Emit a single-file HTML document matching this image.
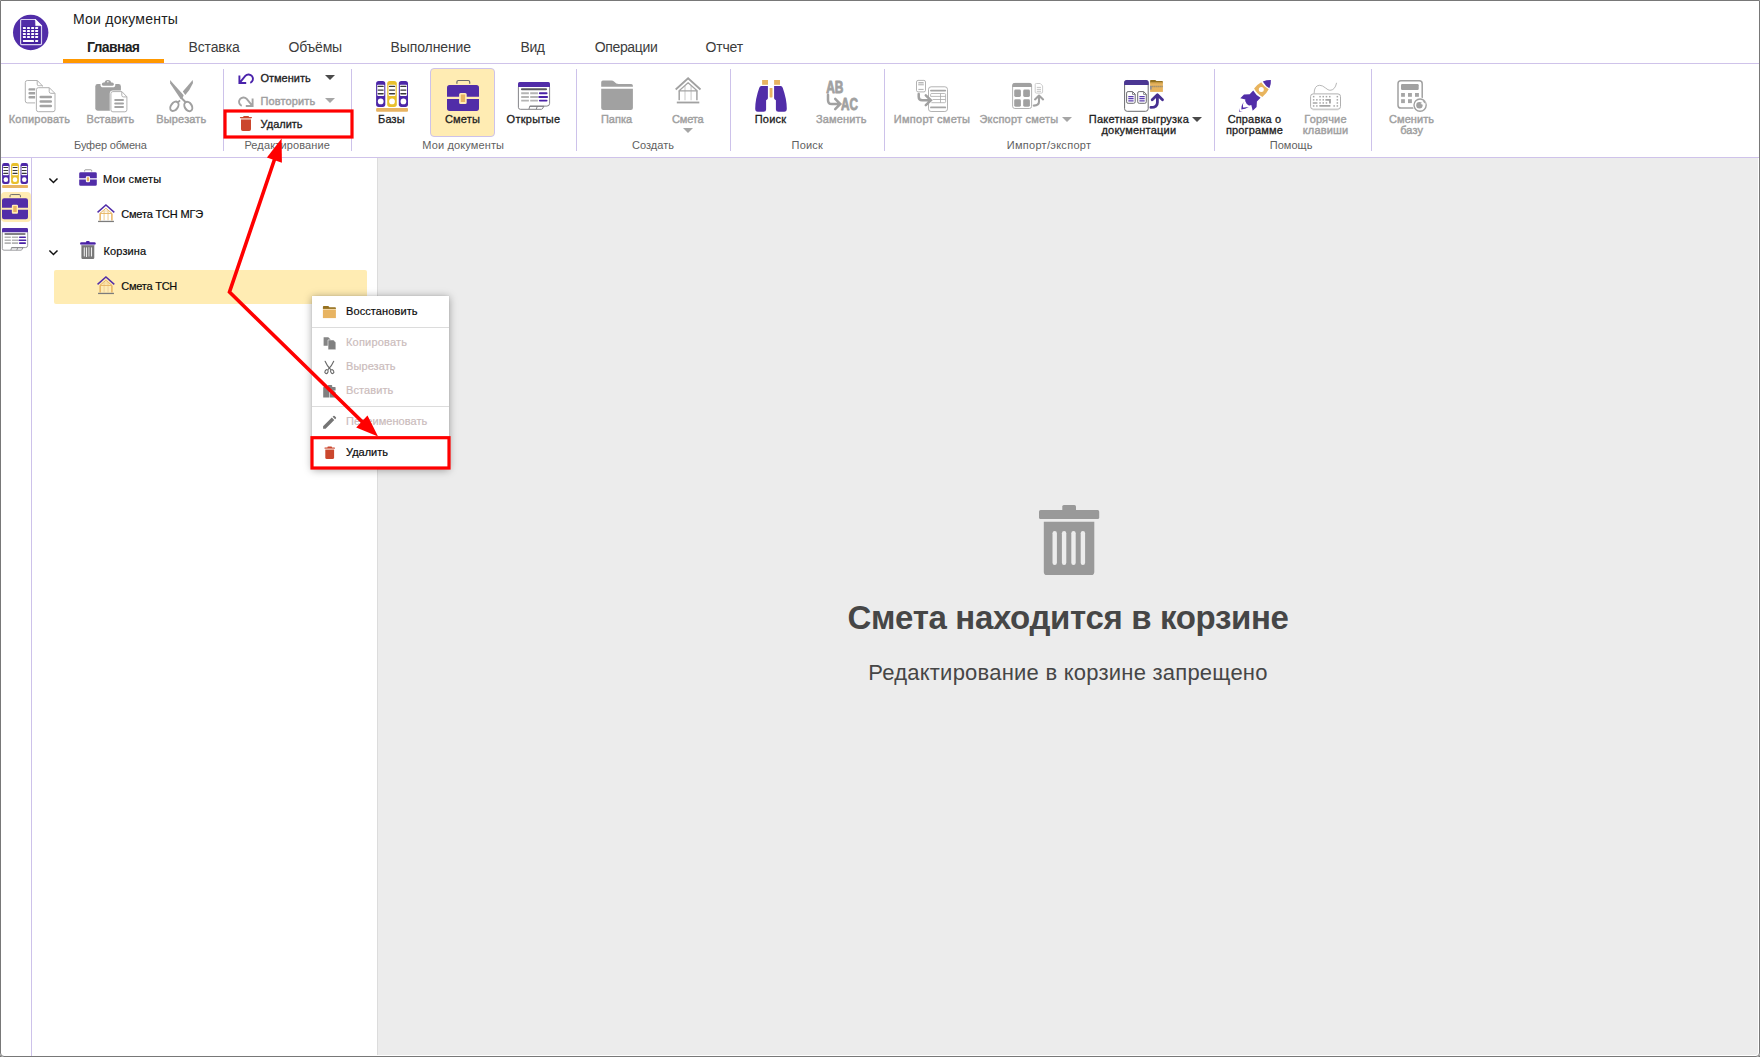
<!DOCTYPE html>
<html lang="ru">
<head>
<meta charset="utf-8">
<title>Мои документы</title>
<style>
*{box-sizing:border-box;margin:0;padding:0}
html,body{width:1760px;height:1057px;overflow:hidden;background:#fff}
body{position:relative;font-family:"Liberation Sans",sans-serif;color:#212121}
.abs{position:absolute}
.t{position:absolute;white-space:nowrap;line-height:1}
svg{position:absolute;overflow:visible}
/* window frame */
#frame{position:absolute;left:0;top:0;width:1760px;height:1057px;border:1px solid #787878;border-radius:0 0 4px 4px;box-shadow:0 0 0 3px #787878;z-index:50;pointer-events:none}
/* header */
#title{left:73px;top:12px;font-size:14px;letter-spacing:.24px;color:#212121}
.tab{position:absolute;top:40px;font-size:14px;line-height:14px;white-space:nowrap;color:#3c3c3c}
.tab.act{font-weight:700;color:#212121}
#tabline{left:63px;top:59px;width:101px;height:4px;background:#ff9800}
.hl{position:absolute;left:1px;width:1758px;height:1px;background:#cfc3ea}
.vs{position:absolute;top:69px;width:1px;height:82px;background:#cdc2ea}
/* ribbon labels */
.lb{position:absolute;width:140px;text-align:center;font-size:11px;line-height:11px;top:114px;white-space:nowrap;color:#212121;-webkit-text-stroke:.3px currentColor;letter-spacing:.15px}
.lb.dis{color:#a0a0a0;-webkit-text-stroke-width:.42px}
.gl{position:absolute;width:160px;text-align:center;font-size:11px;line-height:11px;top:140px;white-space:nowrap;color:#5f5f5f;letter-spacing:.13px}
.sm{position:absolute;font-size:11px;line-height:11px;white-space:nowrap;color:#212121;-webkit-text-stroke:.3px currentColor}
.sm.dis{color:#a0a0a0;-webkit-text-stroke-width:.42px}
.tri{position:absolute;width:0;height:0;border-left:5px solid transparent;border-right:5px solid transparent;border-top:5px solid #4a4a4a}
.tri.dis{border-top-color:#a6a6a6}
/* tree */
.tr{position:absolute;font-size:11px;line-height:11px;white-space:nowrap;color:#0c0c0c;-webkit-text-stroke:.2px currentColor}
/* menu */
#menu{left:312px;top:296px;width:137px;height:173px;background:#fff;box-shadow:0 1px 8px rgba(0,0,0,.36),0 0 1px rgba(0,0,0,.12)}
.mi{position:absolute;left:34px;font-size:11px;line-height:11px;white-space:nowrap;color:#0c0c0c;-webkit-text-stroke:.2px currentColor}
.mi.dis{color:#cbbcbc}
.md{position:absolute;left:0;width:137px;height:1px;background:#dcdcdc}
</style>
</head>
<body>
<!-- ===== header ===== -->
<div id="title" class="t">Мои документы</div>
<div class="tab act" style="left:87px;letter-spacing:-.66px">Главная</div>
<div class="tab" style="left:188.4px;letter-spacing:-.1px">Вставка</div>
<div class="tab" style="left:288.5px;letter-spacing:-.21px">Объёмы</div>
<div class="tab" style="left:390.6px;letter-spacing:-.11px">Выполнение</div>
<div class="tab" style="left:520.6px;letter-spacing:-.5px">Вид</div>
<div class="tab" style="left:594.7px;letter-spacing:-.34px">Операции</div>
<div class="tab" style="left:705.6px;letter-spacing:-.21px">Отчет</div>
<div id="tabline" class="abs"></div>
<div class="hl" style="top:63px"></div>
<div class="hl" style="top:157px"></div>

<!-- ===== ribbon separators ===== -->
<div class="vs" style="left:223px"></div>
<div class="vs" style="left:351px"></div>
<div class="vs" style="left:576px"></div>
<div class="vs" style="left:730px"></div>
<div class="vs" style="left:884px"></div>
<div class="vs" style="left:1214px"></div>
<div class="vs" style="left:1371px"></div>

<!-- active button bg -->
<div class="abs" style="left:1px;top:192px;width:30px;height:30px;background:#ffecb3;border-radius:4px"></div>
<div class="abs" style="left:54px;top:270px;width:313px;height:34px;background:#ffecb3;border-radius:2px"></div>
<div class="abs" style="left:430px;top:68px;width:65px;height:69px;background:#ffecb3;border:1px solid #cdc2ea;border-radius:4px"></div>


<!-- ===== icons (page coordinates) ===== -->
<svg id="ic" width="1760" height="1057" viewBox="0 0 1760 1057" style="left:0;top:0">
<defs>
  <g id="binders">
    <rect x="1.1" y="1" width="9.2" height="25.9" rx="2.6" fill="#4c27a8"/>
    <rect x="12.2" y="1" width="9.6" height="25.9" rx="2.6" fill="#e8c02c"/>
    <rect x="23.8" y="1" width="9.2" height="25.9" rx="2.6" fill="#4c27a8"/>
    <g fill="#fff">
      <rect x="2.2" y="4.7" width="7.1" height="11.2" rx=".8"/><rect x="13.5" y="4.7" width="7.1" height="11.2" rx=".8"/><rect x="24.9" y="4.7" width="7.1" height="11.2" rx=".8"/>
      <circle cx="5.7" cy="21.4" r="2.85"/><circle cx="17" cy="21.4" r="2.85"/><circle cx="28.4" cy="21.4" r="2.85"/>
    </g>
    <path d="M3.2,6.4h4.9M3.2,10.1h4.9M3.2,13.7h4.9M14.6,6.4h4.9M14.6,10.1h4.9M14.6,13.7h4.9M25.9,6.4h4.9M25.9,10.1h4.9M25.9,13.7h4.9" stroke="#3a3a3a" stroke-width="1.4" stroke-linecap="round"/>
    <rect x="1.1" y="28.1" width="31.9" height="3.7" rx="1" fill="#e8b462"/>
  </g>
  <g id="brief">
    <path d="M9.9,7.8V6q0,-1.5 1.5,-1.5H21.2q1.5,0 1.5,1.5V7.8" fill="none" stroke="#6b6b6b" stroke-width="1.2"/>
    <path d="M2.6,9.1H29.4a2.6,2.6 0 0 1 2.6,2.6V20.8H19.7V18.5a1.5,1.5 0 0 0 -1.5,-1.5H13.6a1.5,1.5 0 0 0 -1.5,1.5V20.8H0V11.7A2.6,2.6 0 0 1 2.6,9.1Z" fill="#512da8"/>
    <path d="M0,23.1H12.1V26.5a1.5,1.5 0 0 0 1.5,1.5H18.2a1.5,1.5 0 0 0 1.5,-1.5V23.1H32V32.3a2.6,2.6 0 0 1 -2.6,2.6H2.6A2.6,2.6 0 0 1 0,32.3Z" fill="#512da8"/>
    <rect x="13.8" y="18.5" width="4.3" height="7.6" rx=".4" fill="#e8b462"/>
  </g>
  <g id="win">
    <path d="M.4,5V25.2a2,2 0 0 0 2,2H10.9l.9,-3.2H28.9a2.7,2.7 0 0 0 2.7,-2.7V5" fill="#fff" stroke="#77777c" stroke-width=".9"/>
    <path d="M11.8,24.2H25.9l-1.6,2.6q-.3,.4 -.9,.4H10.9M19.3,24.2l-1.1,3" fill="none" stroke="#77777c" stroke-width=".9"/>
    <path d="M0,5V1.6A1.6,1.6 0 0 1 1.6,0H30.4A1.6,1.6 0 0 1 32,1.6V5Z" fill="#512da8"/>
    <path d="M3.9,7.2H28.1" stroke="#5a5a5e" stroke-width="1.9" stroke-linecap="round"/>
    <path d="M3.2,11.2h7.7M12.2,11.2h7.7M3.2,14.9h7.7M12.2,14.9h7.7M3.2,18.5h7.7M12.2,18.5h7.7" stroke="#b4b4b4" stroke-width="1.9"/>
    <path d="M21.8,11.2h6.8M21.2,14.9h7.9M21.8,18.5h6.8" stroke="#4a22a6" stroke-width="1.9" stroke-linecap="round"/>
  </g>
  <g id="house">
    <path d="M10,8.6V22.9M16.1,8.6V22.9" stroke="var(--c3)" stroke-width="1.3" fill="none"/>
    <path d="M4.1,13.4L13.1,5.3L22.1,13.4Z" stroke="var(--c2)" stroke-width="1.2" fill="none" stroke-linejoin="round"/>
    <path d="M4.2,13.4V22.9M21.9,13.4V22.9" stroke="var(--c2)" stroke-width="1.5" fill="none"/>
    <path d="M.7,12.1L13.1,.9L25.5,12.1" stroke="var(--c1)" stroke-width="1.8" fill="none"/>
    <rect x="1.8" y="24.2" width="22.5" height="1.8" fill="var(--c4)"/>
  </g>
  <g id="house2" fill="none">
    <path d="M12.1,14.3V24.3M16.04,14.3V24.3" stroke="#f2d5a2" stroke-width="1.2"/>
    <path d="M7.9,17.4L13.92,12.3L19.95,17.4Z" stroke="#e8b462" stroke-width="1" stroke-linejoin="round"/>
    <path d="M10.6,15H17.2" stroke="#f0cf96" stroke-width=".8"/>
    <path d="M8.15,17.4V24.4M19.9,17.4V24.4" stroke="#e8b462" stroke-width="1.5"/>
    <path d="M5.55,16.35L13.92,8.85L22.3,16.35" stroke="#512da8" stroke-width="1.45"/>
    <rect x="6.05" y="24.8" width="15.9" height="1.3" fill="#7c7c7c"/>
  </g>
</defs>

<!-- logo -->
<circle cx="30.7" cy="32.45" r="17.7" fill="#512da8"/>
<rect x="21" y="26.2" width="20.3" height="18" fill="#43209f"/>
<path d="M21.6,19.5H35.3L41.5,25.8V43.6q0,1 -1,1H21.6q-1,0 -1,-1V20.5q0,-1 1,-1Z" fill="none" stroke="#d9d1ef" stroke-width="1.2"/>
<path d="M35.3,19.3L41.8,25.8H35.6Z" fill="#fff" stroke="#fff" stroke-width=".4" stroke-linejoin="round"/>
<g fill="#fff">
  <rect x="22.9" y="27" width="3" height="1.9" rx=".4"/><rect x="27" y="27" width="3" height="1.9" rx=".4"/><rect x="31.1" y="27" width="3" height="1.9" rx=".4"/><rect x="35.1" y="27" width="3" height="1.9" rx=".4"/>
  <rect x="22.9" y="30" width="3" height="1.9" rx=".4"/><rect x="27" y="30" width="3" height="1.9" rx=".4"/><rect x="31.1" y="30" width="3" height="1.9" rx=".4"/><rect x="35.1" y="30" width="3" height="1.9" rx=".4"/>
  <rect x="22.9" y="33.1" width="3" height="1.9" rx=".4"/><rect x="27" y="33.1" width="3" height="1.9" rx=".4"/><rect x="31.1" y="33.1" width="3" height="1.9" rx=".4"/><rect x="35.1" y="33.1" width="3" height="1.9" rx=".4"/>
  <rect x="22.9" y="36.1" width="3" height="1.9" rx=".4"/><rect x="27" y="36.1" width="3" height="1.9" rx=".4"/><rect x="31.1" y="36.1" width="3" height="1.9" rx=".4"/><rect x="35.1" y="36.1" width="3" height="1.9" rx=".4"/>
  <rect x="22.9" y="40" width="11.1" height="1.9" rx=".4"/><rect x="35.1" y="40" width="3" height="1.9" rx=".4"/>
</g>

<!-- copy (disabled) -->
<g stroke="#a8a8a8" stroke-width=".9" fill="#fff">
  <path d="M27.3,80.5H37.3L42.5,85.9V100.9a2,2 0 0 1 -2,2H27.3a2,2 0 0 1 -2,-2V82.5a2,2 0 0 1 2,-2Z"/>
  <path d="M37.2,80.6V84.2a1.6,1.6 0 0 0 1.6,1.6H42.4" fill="none"/>
</g>
<path d="M29.6,89.4H38M29.6,93.2H38M29.6,97.2H38" stroke="#a3a3a3" stroke-width="2.4" stroke-linecap="round"/>
<g stroke="#a8a8a8" stroke-width=".9" fill="#fff">
  <path d="M38.4,87.7H49.3L55,93.4V109.7a2,2 0 0 1 -2,2H38.4a2,2 0 0 1 -2,-2V89.7a2,2 0 0 1 2,-2Z" stroke="#fff" stroke-width="2.6"/>
  <path d="M38.4,87.7H49.3L55,93.4V109.7a2,2 0 0 1 -2,2H38.4a2,2 0 0 1 -2,-2V89.7a2,2 0 0 1 2,-2Z"/>
  <path d="M49.2,87.8V91.6a1.7,1.7 0 0 0 1.7,1.7H54.9" fill="none"/>
</g>
<path d="M40.7,97.1H50.8M40.7,101.5H50.8M40.7,105.9H50.8" stroke="#a3a3a3" stroke-width="2.5" stroke-linecap="round"/>

<!-- paste (disabled) -->
<rect x="95.3" y="84" width="25.6" height="26.7" rx="2.4" fill="#a0a0a0"/>
<path d="M100.5,83V84.7a2.6,2.6 0 0 0 2.6,2.6H112.7a2.6,2.6 0 0 0 2.6,-2.6V83Z" fill="#fff"/>
<rect x="101.9" y="82.5" width="11.9" height="3.3" rx="1.6" fill="#a0a0a0"/>
<path d="M104.4,83.4Q104.7,80 107.9,80Q111,80 111.3,83.4Z" fill="#a0a0a0"/>
<circle cx="107.9" cy="81.7" r=".75" fill="#fff"/>
<path d="M112.9,91.6H121.9L126.9,96.8V109.8a2,2 0 0 1 -2,2H112.9a2,2 0 0 1 -2,-2V93.6a2,2 0 0 1 2,-2Z" fill="#fff" stroke="#fff" stroke-width="2.3"/>
<path d="M112.9,91.6H121.9L126.9,96.8V109.8a2,2 0 0 1 -2,2H112.9a2,2 0 0 1 -2,-2V93.6a2,2 0 0 1 2,-2Z" fill="#fff" stroke="#a8a8a8" stroke-width=".9"/>
<path d="M121.8,91.7V95.3a1.6,1.6 0 0 0 1.6,1.6H126.8" fill="none" stroke="#a8a8a8" stroke-width=".9"/>
<path d="M115.2,99.9H123M115.2,103.4H123M115.2,106.9H123" stroke="#a3a3a3" stroke-width="2" stroke-linecap="round"/>

<!-- scissors (disabled) -->
<g fill="#a0a0a0">
  <path d="M170,79.9L183.7,95.3L182.6,98.1L180.6,98.9L170.2,83.6Z"/>
  <path d="M192.7,80.1L193,83Q190,90 185.3,95L182.8,91.6Z"/>
</g>
<g fill="none" stroke="#a0a0a0" stroke-width="2">
  <path d="M181.2,97.8L186.2,102.8"/>
  <ellipse cx="188.3" cy="106.5" rx="3.5" ry="5" transform="rotate(-32 188.3 106.5)"/>
  <path d="M180,100.4L178.2,102.2" stroke-width="1.8"/>
  <ellipse cx="174.4" cy="106.3" rx="3.4" ry="5.2" transform="rotate(36 174.4 106.3)"/>
</g>

<!-- undo / redo -->
<path d="M239.4,75.4V83H246.2M239.6,82.8L245.3,75.9A4.4,4.4 0 1 1 250.3,82.9" fill="none" stroke="#4a23ab" stroke-width="1.9" stroke-linejoin="miter"/>
<path d="M252.6,98.4V106H245.8M252.4,105.8L246.7,98.9A4.4,4.4 0 1 0 241.7,105.9" fill="none" stroke="#a3a3a3" stroke-width="1.9"/>
<!-- delete -->
<g fill="#cb472d">
  <rect x="243.2" y="116" width="5.8" height="1.6" rx=".8"/>
  <rect x="239.9" y="116.9" width="12.1" height="1.3" rx=".6"/>
  <rect x="241" y="118.1" width="10" height="1.8" fill="#e6ab9d"/>
  <path d="M241,119.8H251V129.2a1.8,1.8 0 0 1 -1.8,1.8H242.8a1.8,1.8 0 0 1 -1.8,-1.8Z"/>
</g>

<!-- bases / estimates / opened -->
<use href="#binders" transform="translate(375,80)"/>
<use href="#brief" transform="translate(447,76) "/>
<use href="#win" transform="translate(518,82.1)"/>

<!-- folder (disabled) -->
<path d="M602.9,80.5H611.4Q613,80.5 614.3,81.8Q616.2,84.1 618.5,84.1H631.2a1.7,1.7 0 0 1 1.7,1.7V86.7H601.2V82.2a1.7,1.7 0 0 1 1.7,-1.7Z" fill="#a1a1a1"/>
<path d="M601.2,88.7H632.9V107.9a2.1,2.1 0 0 1 -2.1,2.1H603.3a2.1,2.1 0 0 1 -2.1,-2.1Z" fill="#a1a1a1"/>
<!-- new estimate house (disabled) -->
<g style="--c1:#a1a1a1;--c2:#a4a4a4;--c3:#d4d4d4;--c4:#a1a1a1" transform="translate(675,77.4)"><use href="#house"/></g>

<!-- binoculars -->
<g fill="#e8b462"><rect x="762.1" y="80" width="5.9" height="4.8"/><rect x="774.1" y="80" width="5.9" height="4.8"/><rect x="769.6" y="87.9" width="2.9" height="9.5" rx=".6"/></g>
<path id="bino" d="M761.3,86H767.9V98.2Q767.9,99.4 766.1,100.2V109.4Q766.1,111.8 763.6,111.8H757.8Q755.2,111.8 755.2,108.6Q755.3,99 759.2,88Q759.8,86 761.3,86Z" fill="#512da8"/>
<use href="#bino" transform="translate(1542,0) scale(-1,1)"/>

<!-- replace AB -> AC (disabled) -->
<g font-family="'Liberation Sans',sans-serif" font-weight="700" font-size="16.6" fill="#a1a1a1" stroke="#a1a1a1" stroke-width=".9" stroke-linejoin="round">
  <text x="826.2" y="92.8" textLength="17.2" lengthAdjust="spacingAndGlyphs">AB</text>
  <text x="841.1" y="109.7" textLength="16.9" lengthAdjust="spacingAndGlyphs">AC</text>
</g>
<path d="M828,94.8V100.2Q828,104 831.8,104H839.6M835.2,98.9L840.3,104L835.2,109.1" fill="none" stroke="#a1a1a1" stroke-width="2.5" stroke-linecap="round" stroke-linejoin="miter"/>

<!-- import (disabled) -->
<g fill="#fff" stroke="#aaa" stroke-width=".9">
  <rect x="916.5" y="80.4" width="9" height="11.5" rx="1.6"/>
  <rect x="928.5" y="86.8" width="19" height="24.7" rx="2.6"/>
  <path d="M931.4,93.5H944.6Q945.6,93.5 945.6,94.5V101.7Q945.6,102.7 944.6,102.7H931.4M930.7,96.4H945.6M932.6,99.5H945.6M940.5,93.5V102.7M930.6,96.4V94.5q0,-1 1,-1" stroke-width=".8"/>
</g>
<path d="M918.4,82.6H923.6M918.4,89.4H923.6" stroke="#a6a6a6" stroke-width=".9"/>
<rect x="918.2" y="83.5" width="5.6" height="1.9" fill="#c4c4c4"/>
<path d="M930.9,90.6H945.3M930.9,107.4H945.3" stroke="#a6a6a6" stroke-width="1.7" stroke-linecap="round"/>
<path d="M918.7,94V96.8Q918.7,100.3 922.2,100.3H930M925.8,95.4L930.9,100.3L925.8,105.2" fill="none" stroke="#a1a1a1" stroke-width="2.5" stroke-linecap="round"/>

<!-- export (disabled) -->
<rect x="1012.6" y="83.4" width="19" height="25.1" rx="2.2" fill="#fff" stroke="#aaa" stroke-width=".9"/>
<path d="M1012.3,86.9V85.4a2.3,2.3 0 0 1 2.3,-2.3H1029.6a2.3,2.3 0 0 1 2.3,2.3V86.9Z" fill="#a1a1a1"/>
<g fill="#a1a1a1"><rect x="1014.2" y="89.6" width="6.7" height="7.4" rx="1.4"/><rect x="1023.2" y="89.6" width="6.7" height="7.4" rx="1.4"/><rect x="1014.2" y="99.3" width="6.7" height="7.4" rx="1.4"/><rect x="1023.2" y="99.3" width="6.7" height="7.4" rx="1.4"/></g>
<path d="M1036.3,83.5H1040.3L1042.6,85.9V92a1.1,1.1 0 0 1 -1.1,1.1H1036.3a1.1,1.1 0 0 1 -1.1,-1.1V84.6a1.1,1.1 0 0 1 1.1,-1.1Z" fill="#fff" stroke="#c6c6c6" stroke-width=".9"/>
<path d="M1036.8,87.4H1041M1036.8,89.4H1041M1036.8,91.3H1041" stroke="#c0c0c0" stroke-width=".9"/>
<path d="M1035,99.4L1039,95.6L1043.1,99.4M1039,96V101.5Q1039,105.6 1033.8,105.6" fill="none" stroke="#a1a1a1" stroke-width="2.1" stroke-linecap="round" stroke-linejoin="round"/>

<!-- batch export -->
<rect x="1124.6" y="80.5" width="23.6" height="30.8" rx="2.6" fill="#fff" stroke="#6c6c70" stroke-width="1"/>
<path d="M1124.1,84.9V82.7a2.7,2.7 0 0 1 2.7,-2.7H1146a2.7,2.7 0 0 1 2.7,2.7V84.9Z" fill="#4b3793"/>
<g fill="#fff" stroke="#6c6c70" stroke-width="1">
  <path d="M1128.1,91.6H1132.6L1135.2,94.2V101.8a1.5,1.5 0 0 1 -1.5,1.5H1128.1a1.5,1.5 0 0 1 -1.5,-1.5V93.1a1.5,1.5 0 0 1 1.5,-1.5Z"/>
  <path d="M1139.2,91.6H1143.7L1146.3,94.2V101.8a1.5,1.5 0 0 1 -1.5,1.5H1139.2a1.5,1.5 0 0 1 -1.5,-1.5V93.1a1.5,1.5 0 0 1 1.5,-1.5Z"/>
  <path d="M1132.5,91.8V94.4H1135.1M1143.6,91.8V94.4H1146.2" fill="none" stroke-width=".8"/>
</g>
<path d="M1128.3,96.6H1133.6M1128.3,98.7H1133.6M1128.3,100.8H1133.6M1139.4,96.6H1144.7M1139.4,98.7H1144.7M1139.4,100.8H1144.7" stroke="#5b3db0" stroke-width="1.2"/>
<path d="M1150.1,80.8q0,-.8 .8,-.8H1155q.7,0 1,.5l.3,.4H1162.1q.8,0 .8,.8V83H1150.1Z" fill="#93701f"/>
<rect x="1150.1" y="82.4" width="12.8" height="9.5" fill="#e8b45e"/>
<rect x="1150.1" y="82.4" width="12.8" height=".9" fill="#c49a45"/>
<path d="M1150.3,86.6H1162.9" stroke="#8b8578" stroke-width="1.5" stroke-dasharray="1.2,.8"/>
<rect x="1150.1" y="86" width="1.6" height="3.6" fill="#8d8d95"/>
<path d="M1152.2,99.8L1157.4,94.8L1162.5,99.8M1157.4,95.4V102.4Q1157.4,107.4 1150.9,107.4" fill="none" stroke="#462f91" stroke-width="2.8" stroke-linecap="round" stroke-linejoin="round"/>

<!-- about: rocket -->
<path d="M1262.8,81.4Q1266.6,79.9 1270.9,80Q1271.2,84.3 1269.4,88.2Q1265.5,86.2 1262.8,81.4Z" fill="#512da8"/>
<path d="M1261.2,82.2Q1264,86.8 1268.7,89.2Q1266.6,93.6 1262.4,96.9Q1257,94 1254.1,88.5Q1257,84.5 1261.2,82.2Z" fill="#e8b45e"/>
<circle cx="1261.3" cy="89.4" r="2.5" fill="#fff"/>
<path d="M1253.2,90.5Q1256,95.5 1260.6,97.7L1256.9,101.5L1256.6,107L1252.7,110.7L1251.3,105.1Q1250.2,105.6 1248.9,105.4Q1246,103.8 1245.3,101.2Q1245,100.2 1245.4,99.6L1240.3,98.3L1244,94.4L1249.7,94.2Z" fill="#512da8"/>
<path d="M1243.5,102Q1241.2,105.6 1241.3,109.4Q1245.2,109.4 1248.8,107.1Q1245.4,107.7 1243,107.5Q1242.7,104.8 1243.5,102Z" fill="#512da8"/>
<path d="M1239.6,108.1Q1238.9,110 1239.2,111.8Q1241,112 1242.8,111.5Q1240.9,111.4 1239.8,110.9Q1239.3,109.6 1239.6,108.1Z" fill="#512da8"/>

<!-- hotkeys keyboard (disabled) -->
<rect x="1310.6" y="93.9" width="29.9" height="15.3" rx="2.6" fill="#fff" stroke="#b0b0b0" stroke-width="1"/>
<path d="M1312.6,109.9H1338.4" stroke="#d2d2d2" stroke-width=".8"/>
<path d="M1314.1,93.6Q1314.2,85.3 1319.7,85.3Q1322.4,85.3 1325.6,88Q1328.2,90.3 1329.9,90.3Q1335,90.3 1336.6,82.8" fill="none" stroke="#b0b0b0" stroke-width=".9"/>
<g fill="#a6a6a6">
  <rect x="1312.9" y="95.9" width="1.5" height="1.5"/><rect x="1319.3" y="95.9" width="1.5" height="1.5"/><rect x="1322.5" y="95.9" width="1.5" height="1.5"/><rect x="1325.7" y="95.9" width="1.5" height="1.5"/><rect x="1329" y="95.9" width="1.5" height="1.5"/><rect x="1336.6" y="95.9" width="1.5" height="1.5"/>
  <rect x="1312.9" y="99.1" width="1.5" height="1.5"/><rect x="1316.1" y="99.1" width="1.5" height="1.5"/><rect x="1319.3" y="99.1" width="1.5" height="1.5"/><rect x="1322.5" y="99.1" width="1.5" height="1.5"/><rect x="1336.6" y="99.1" width="1.5" height="1.5"/>
  <path d="M1325.4,98.9H1330.9V103.6H1329V100.7H1325.4Z"/>
  <rect x="1312.6" y="102.2" width="5" height="1.5" rx=".7"/><rect x="1319.3" y="102.2" width="1.5" height="1.5"/><rect x="1322.5" y="102.2" width="1.5" height="1.5"/><rect x="1325.7" y="102.2" width="1.5" height="1.5"/><rect x="1336.6" y="102.2" width="1.5" height="1.5"/>
  <rect x="1312.9" y="105.2" width="1.5" height="1.5"/><rect x="1316.1" y="105.2" width="1.5" height="1.5"/><rect x="1319.2" y="105" width="11.4" height="1.8" rx=".8"/><rect x="1333.4" y="105.2" width="1.5" height="1.5"/><rect x="1336.6" y="105.2" width="1.5" height="1.5"/>
</g>

<!-- change base calculator (disabled) -->
<rect x="1398" y="80.8" width="24.2" height="27.3" rx="2.9" fill="#fff" stroke="#a1a1a1" stroke-width="1.5"/>
<rect x="1401" y="84.1" width="17.7" height="5.9" rx="1.2" fill="#a1a1a1"/>
<g fill="#a6a6a6"><rect x="1401.1" y="93" width="3.8" height="3.8"/><rect x="1408" y="93" width="3.9" height="3.8"/><rect x="1415" y="93" width="3.9" height="3.8"/><rect x="1401.1" y="99.2" width="3.8" height="3.9"/><rect x="1408" y="99.2" width="3.9" height="3.9"/></g>
<circle cx="1420.1" cy="105.1" r="7.6" fill="#fff"/>
<circle cx="1420.1" cy="105.1" r="6.1" fill="#fff" stroke="#a1a1a1" stroke-width="1.4"/>
<circle cx="1419.4" cy="105.2" r="3.2" fill="#a1a1a1"/>
<path d="M1420.4,104L1425.4,100.2L1425.2,104.9Z" fill="#fff"/><path d="M1422.6,101.2L1425.1,101.1L1425,103.6Z" fill="#a1a1a1"/>

<!-- sidebar strip icons -->
<use href="#binders" transform="translate(1.2,162.25) scale(.8125)"/>
<use href="#brief" transform="translate(2,190.9) scale(.8125)"/>
<use href="#win" transform="translate(2,228.1) scale(.8125)"/>

<!-- tree -->
<path d="M49.4,178.5L53.45,182.5L57.5,178.5" fill="none" stroke="#111" stroke-width="1.5"/>
<path d="M49.4,250.5L53.45,254.5L57.5,250.5" fill="none" stroke="#111" stroke-width="1.5"/>
<use href="#brief" transform="translate(79.2,167.4) scale(.55,.527)"/>
<use href="#house2" transform="translate(92,196)"/>
<use href="#house2" transform="translate(92,268)"/>
<!-- tree trash -->
<rect x="86" y="241" width="3.7" height="2.4" rx="1" fill="#4a22a6"/>
<rect x="80.1" y="242.3" width="15.6" height="2.5" rx="1.2" fill="#4a22a6"/>
<rect x="80.9" y="244.6" width="14" height=".8" fill="#b9a8df"/>
<path d="M81.4,245.2H94.3V257.8a1.2,1.2 0 0 1 -1.2,1.2H82.6a1.2,1.2 0 0 1 -1.2,-1.2Z" fill="#787878"/>
<path d="M84.3,247.7V256M86.5,247.7V256.4M91.5,247.7V256" stroke="#ececec" stroke-width="1.1" stroke-linecap="round"/>
<path d="M88.9,247.7V256" stroke="#c2c2c2" stroke-width="1.3" stroke-linecap="round"/>
</svg>

<!-- ===== ribbon labels ===== -->
<div class="lb dis" style="left:-30.5px;letter-spacing:.23px">Копировать</div>
<div class="lb dis" style="left:40.4px">Вставить</div>
<div class="lb dis" style="left:111.4px">Вырезать</div>
<div class="gl" style="left:30.4px;letter-spacing:-.18px">Буфер обмена</div>

<div class="sm" style="left:260.4px;top:73px">Отменить</div>
<div class="sm dis" style="left:260.4px;top:96px;letter-spacing:.15px">Повторить</div>
<div class="sm" style="left:260.6px;top:119px">Удалить</div>
<div class="tri" style="left:325px;top:75px"></div>
<div class="tri dis" style="left:325px;top:98px"></div>
<div class="gl" style="left:207.2px">Редактирование</div>

<div class="lb" style="left:321.5px">Базы</div>
<div class="lb" style="left:392.5px">Сметы</div>
<div class="lb" style="left:463.5px;letter-spacing:.29px">Открытые</div>
<div class="gl" style="left:383.2px">Мои документы</div>

<div class="lb dis" style="left:546.5px;letter-spacing:0">Папка</div>
<div class="lb dis" style="left:617.7px;letter-spacing:-.2px">Смета</div>
<div class="tri dis" style="left:683px;top:128px"></div>
<div class="gl" style="left:573px;letter-spacing:.04px">Создать</div>

<div class="lb" style="left:700.5px;letter-spacing:.2px">Поиск</div>
<div class="lb dis" style="left:771.4px">Заменить</div>
<div class="gl" style="left:727.3px;letter-spacing:.2px">Поиск</div>

<div class="lb dis" style="left:862px;letter-spacing:.25px">Импорт сметы</div>
<div class="lb dis" style="left:948.9px;letter-spacing:.22px">Экспорт сметы</div>
<div class="tri dis" style="left:1062px;top:117px"></div>
<div class="lb" style="left:1068.9px;letter-spacing:.22px">Пакетная выгрузка<br>документации</div>
<div class="tri" style="left:1192px;top:117px"></div>
<div class="gl" style="left:969px;letter-spacing:.29px">Импорт/экспорт</div>

<div class="lb" style="left:1184.5px">Справка о<br>программе</div>
<div class="lb dis" style="left:1255.5px">Горячие<br>клавиши</div>
<div class="gl" style="left:1211.1px;letter-spacing:.04px">Помощь</div>

<div class="lb dis" style="left:1341.6px;letter-spacing:.08px">Сменить<br>базу</div>

<!-- ===== left strip + tree ===== -->
<div class="abs" style="left:31px;top:158px;width:1px;height:898px;background:#cdc2ea"></div>
<div class="tr" style="left:103.1px;top:173.7px;letter-spacing:.2px">Мои сметы</div>
<div class="tr" style="left:121.2px;top:208.7px;letter-spacing:-.17px">Смета ТСН МГЭ</div>
<div class="tr" style="left:103.5px;top:245.7px;letter-spacing:.12px">Корзина</div>
<div class="tr" style="left:121.2px;top:280.7px;letter-spacing:-.23px">Смета ТСН</div>

<!-- ===== gray content ===== -->
<div class="abs" style="left:377px;top:158px;width:1381px;height:897px;background:#ececec;border-left:1px solid #dcdcdc;border-radius:0 0 3px 0"></div>
<div class="t" style="left:668px;width:800px;text-align:center;top:600.8px;font-size:33px;font-weight:700;color:#464646;letter-spacing:-.34px">Смета находится в корзине</div>
<div class="t" style="left:668px;width:800px;text-align:center;top:662.3px;font-size:22px;color:#464646;letter-spacing:.23px">Редактирование в корзине запрещено</div>


<svg id="ic2" width="1760" height="1057" viewBox="0 0 1760 1057" style="left:0;top:0">
<g fill="#999">
  <rect x="1062.3" y="505" width="13.7" height="7" rx="1.6"/>
  <rect x="1039" y="510.1" width="60.2" height="9" rx="1.6"/>
  <path d="M1043.8,521.7H1094.3V571.9a3.1,3.1 0 0 1 -3.1,3.1H1046.9a3.1,3.1 0 0 1 -3.1,-3.1Z"/>
</g>
<g fill="#ececec"><rect x="1052.5" y="531" width="4.4" height="34" rx="2.2"/><rect x="1061.9" y="531" width="4.4" height="34" rx="2.2"/><rect x="1071.3" y="531" width="4.4" height="34" rx="2.2"/><rect x="1080.7" y="531" width="4.4" height="34" rx="2.2"/></g>
</svg>

<!-- ===== context menu ===== -->
<div id="menu" class="abs">
  <div class="mi" style="top:10px;letter-spacing:.1px">Восстановить</div>
  <div class="md" style="top:31px"></div>
  <div class="mi dis" style="top:41px;letter-spacing:.2px">Копировать</div>
  <div class="mi dis" style="top:65px;letter-spacing:.09px">Вырезать</div>
  <div class="mi dis" style="top:89px;letter-spacing:.1px">Вставить</div>
  <div class="md" style="top:110px"></div>
  <div class="mi dis" style="top:120px;letter-spacing:.05px">Переименовать</div>
  <div class="mi" style="top:151px">Удалить</div>
</div>


<svg id="ic3" width="1760" height="1057" viewBox="0 0 1760 1057" style="left:0;top:0">
<!-- restore folder -->
<path d="M322.9,306.9q0,-.9 .9,-.9H327.9q.8,0 1.1,.6l.3,.55H335q.9,0 .9,.9V309H322.9Z" fill="#96711f"/>
<rect x="322.9" y="308.9" width="13" height="1" fill="#f5dcae"/>
<rect x="322.9" y="309.8" width="13" height="8.3" fill="#e8b462"/>
<!-- copy -->
<path d="M323.6,337.2H328.3L330.6,339.6V345.7H323.6Z" fill="#858585"/>
<path d="M328,339.9H333.6L335.9,342.4V349.8H328Z" fill="#808080" stroke="#fff" stroke-width=".6"/>
<!-- cut -->
<g fill="none" stroke="#6a6a6a" stroke-width="1.1" stroke-linecap="round">
  <path d="M325.1,361.3Q326.8,365.6 330.6,369.4M333.7,361.3Q332,365.6 328.2,369.4"/>
  <ellipse cx="332.2" cy="371.6" rx="1.5" ry="2" transform="rotate(-30 332.2 371.6)"/>
  <ellipse cx="326.5" cy="371.6" rx="1.5" ry="2" transform="rotate(30 326.5 371.6)"/>
</g>
<!-- paste -->
<path d="M323.2,387.6a.6,.6 0 0 1 .6,-.6H327.8V385.8a.8,.8 0 0 1 .8,-.8H331.4a.8,.8 0 0 1 .8,.8V387H335a.6,.6 0 0 1 .6,.6V390.6H329.2V397.4H323.2Z" fill="#808080"/>
<path d="M329.7,390.2H333.4L335.6,392.5V397.4H329.7Z" fill="#808080"/>
<!-- rename pencil -->
<path d="M323.1,428.7V426.2L331.8,417.5L334.3,420L325.6,428.7ZM332.6,416.7L333.4,415.9a.9,.9 0 0 1 1.2,0L335.9,417.2a.9,.9 0 0 1 0,1.2L335.1,419.2Z" fill="#757575"/>
<!-- delete -->
<g fill="#cb472d">
  <rect x="327.4" y="446.6" width="4.6" height="1.5" rx=".7"/>
  <rect x="324.4" y="447.5" width="10.6" height="1.2" rx=".6"/>
  <rect x="325.3" y="448.6" width="8.8" height="1.5" fill="#e6ab9d"/>
  <path d="M325.3,450H334.1V457.4a1.6,1.6 0 0 1 -1.6,1.6H326.9a1.6,1.6 0 0 1 -1.6,-1.6Z"/>
</g>
</svg>

<!-- ===== red annotations ===== -->
<svg id="anno" width="1760" height="1057" style="left:0;top:0;z-index:40" viewBox="0 0 1760 1057">
  <rect x="225" y="111" width="127" height="26" fill="none" stroke="#ff0000" stroke-width="3.2"/>
  <rect x="312" y="437.7" width="137" height="30.3" fill="none" stroke="#ff0000" stroke-width="3.2"/>
  <polyline points="275.5,156.5 229.5,292 363.5,423" fill="none" stroke="#ff0000" stroke-width="3.6" stroke-linejoin="miter"/>
  <polygon points="281.6,138.4 266.9,157.5 281.9,162.8" fill="#ff0000"/>
  <polygon points="378.1,436.5 356.2,427.5 367.5,415.6" fill="#ff0000"/>
</svg>

<div id="frame"></div>
</body>
</html>
